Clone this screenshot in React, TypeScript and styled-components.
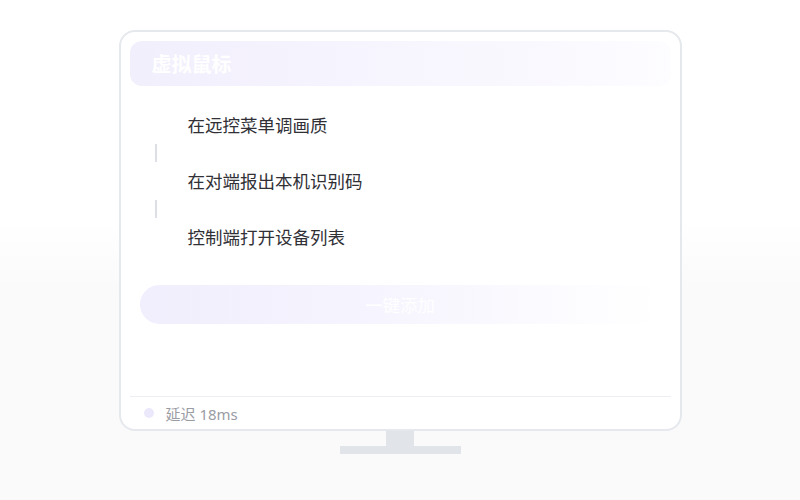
import React from "react";
import styled, { createGlobalStyle } from "styled-components";

const steps = ["在远控菜单调画质", "在对端报出本机识别码", "控制端打开设备列表"];

function App() {
  return (
    <>
      <GlobalStyle />
      <Page>
        <Monitor>
          <Screen>
            <Header>
              <Title>虚拟鼠标</Title>
            </Header>
            <StepList>
              {steps.map((text, i) => (
                <React.Fragment key={text}>
                  {i > 0 && <Connector />}
                  <Step>{text}</Step>
                </React.Fragment>
              ))}
            </StepList>
            <AddButton>一键添加</AddButton>
            <Spacer />
            <Footer>
              <Dot />
              <Latency>延迟 18ms</Latency>
            </Footer>
          </Screen>
          <Neck />
          <Base />
        </Monitor>
      </Page>
    </>
  );
}

export default App;

const GlobalStyle = createGlobalStyle`
  html, body {
    margin: 0;
    padding: 0;
  }
  body {
    font-family: "Noto Sans", "Noto Sans CJK SC", sans-serif;
  }
`;

const Page = styled.div`
  width: 800px;
  height: 500px;
  background: linear-gradient(to bottom, #ffffff 0%, #ffffff 44%, #fafafb 58%, #fafafb 100%);
  display: flex;
  justify-content: center;
  padding-top: 30px;
  box-sizing: border-box;
`;

const Monitor = styled.div`
  display: flex;
  flex-direction: column;
  align-items: center;
`;

const Screen = styled.div`
  width: 563px;
  height: 401px;
  box-sizing: border-box;
  border: 2px solid #e5e8ec;
  border-radius: 16px;
  background: #ffffff;
  padding: 9px 9px 0;
  display: flex;
  flex-direction: column;
`;

const Header = styled.div`
  height: 45px;
  border-radius: 12px;
  background: linear-gradient(90deg, #f2effd 0%, #f7f5fe 50%, #fdfcff 100%);
  display: flex;
  align-items: center;
  padding-left: 22px;
`;

const Title = styled.span`
  font-family: "Noto Sans CJK SC", sans-serif;
  font-size: 20px;
  font-weight: 700;
  color: #ffffff;
`;

const StepList = styled.div`
  margin-top: 20px;
  margin-left: 25px;
  display: flex;
  flex-direction: column;
`;

const Step = styled.div`
  height: 38px;
  line-height: 38px;
  padding-left: 33px;
  font-family: "Noto Sans CJK SC", sans-serif;
  font-size: 17.5px;
  color: #303036;
`;

const Connector = styled.div`
  width: 2px;
  height: 18px;
  background: #dcdfe4;
`;

const AddButton = styled.div`
  margin: 29px 10px 0;
  height: 39px;
  border-radius: 20px;
  background: linear-gradient(90deg, #f1eefd 0%, #f6f4fe 45%, #ffffff 100%);
  display: flex;
  align-items: center;
  justify-content: center;
  font-family: "Noto Sans CJK SC", sans-serif;
  font-size: 17.5px;
  color: #ffffff;
`;

const Spacer = styled.div`
  flex: 1;
`;

const Footer = styled.div`
  height: 32px;
  border-top: 1px solid #eceef2;
  display: flex;
  align-items: center;
  padding-left: 14px;
  gap: 12px;
`;

const Dot = styled.span`
  width: 10px;
  height: 10px;
  border-radius: 50%;
  background: #ece8fc;
`;

const Latency = styled.span`
  font-family: "Noto Sans", "Noto Sans CJK SC", sans-serif;
  font-size: 15px;
  color: #9a9ca4;
`;

const Neck = styled.div`
  width: 28px;
  height: 15px;
  background: #e1e5ea;
`;

const Base = styled.div`
  width: 121px;
  height: 8px;
  background: #e1e5ea;
`;
